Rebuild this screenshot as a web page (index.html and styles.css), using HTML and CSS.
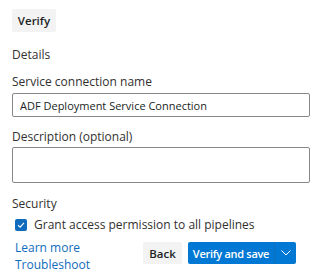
FILE: index.html
```html
<!DOCTYPE html>
<html lang="en">
<head>
    <meta charset="UTF-8">
    <meta name="viewport" content="width=device-width, initial-scale=1.0">
    <title>Service connection</title>
    <link rel="stylesheet" href="styles.css">
</head>
<body>
    <div class="panel">
        <button class="btn btn-verify">Verify</button>

        <div class="section-title">Details</div>

        <label class="field-label" for="conn-name">Service connection name</label>
        <input id="conn-name" class="text-input" type="text" value="ADF Deployment Service Connection">

        <label class="field-label label-desc" for="conn-desc">Description (optional)</label>
        <textarea id="conn-desc" class="text-area"></textarea>

        <div class="section-title security">Security</div>
        <label class="check-row">
            <span class="check-box">
                <svg width="8" height="8" viewBox="0 0 8 8"><path d="M1 4.2 L3.1 6.2 L7 1.9" fill="none" stroke="#fff" stroke-width="1.1"/></svg>
            </span>
            Grant access permission to all pipelines
        </label>

        <div class="footer-row">
            <div class="links">
                <a href="#">Learn more</a>
                <a href="#">Troubleshoot</a>
            </div>
            <div class="actions">
                <button class="btn btn-back">Back</button>
                <div class="split">
                    <button class="btn btn-primary">Verify and save</button>
                    <button class="btn btn-primary btn-drop">
                        <svg width="10" height="6" viewBox="0 0 10 6"><path d="M0.5 0.5 L5 5 L9.5 0.5" fill="none" stroke="#fff" stroke-width="1"/></svg>
                    </button>
                </div>
            </div>
        </div>
    </div>
</body>
</html>
```

FILE: styles.css
```css
body {
    margin: 0;
    background: #fff;
    font-family: "Open Sans", "Noto Sans", Arial, sans-serif;
    font-size: 12px;
    color: #323130;
}
.panel {
    display: flex;
    flex-direction: column;
    align-items: flex-start;
    padding: 9px 12px 0 12px;
}
.btn {
    font-family: inherit;
    font-size: 11.5px;
    font-weight: 600;
    border: none;
    border-radius: 2px;
    cursor: pointer;
    color: #201f1e;
    white-space: nowrap;
}
.btn-verify {
    height: 23px;
    width: 44px;
    padding: 0;
    background: #f3f3f3;
}
.section-title {
    line-height: 18px;
    margin-top: 14px;
}
.security {
    margin-top: 11px;
    line-height: 20px;
}
.field-label {
    line-height: 20px;
    margin-top: 8px;
}
.label-desc {
    margin-top: 10px;
}
.text-input,
.text-area {
    box-sizing: border-box;
    width: 100%;
    border: 1px solid #8a8886;
    border-radius: 2px;
    font-family: inherit;
    font-size: 11px;
    color: #201f1e;
    margin: 0;
}
.text-input {
    height: 24px;
    padding: 0 7px;
    margin-top: 1px;
}
.text-area {
    height: 36px;
    resize: none;
    display: block;
}
.check-row {
    display: flex;
    align-items: center;
    line-height: 20px;
    margin-top: 1px;
    padding-left: 3px;
}
.check-box {
    width: 12px;
    height: 12px;
    border-radius: 2px;
    background: #0f6cbd;
    display: flex;
    align-items: center;
    justify-content: center;
    margin-right: 7px;
}
.footer-row {
    width: 100%;
    display: flex;
    justify-content: space-between;
    align-items: flex-start;
    margin-top: 4px;
}
.links {
    display: flex;
    flex-direction: column;
    padding-left: 3px;
}
.links a {
    color: #0f6cbd;
    text-decoration: none;
    line-height: 17px;
}
.actions {
    display: flex;
    gap: 6px;
    margin-top: 3px;
    margin-right: 14px;
}
.btn-back {
    height: 22px;
    width: 39px;
    padding: 0;
    background: #f3f3f3;
}
.split {
    display: flex;
}
.btn-primary {
    height: 22px;
    width: 86px;
    padding: 0;
    background: #0078d4;
    color: #fff;
    font-size: 11px;
    letter-spacing: -0.3px;
    border-radius: 2px 0 0 2px;
}
.btn-drop {
    width: 22px;
    border-left: 1px solid #106ebe;
    border-radius: 0 2px 2px 0;
    display: flex;
    align-items: center;
    justify-content: center;
}
```
